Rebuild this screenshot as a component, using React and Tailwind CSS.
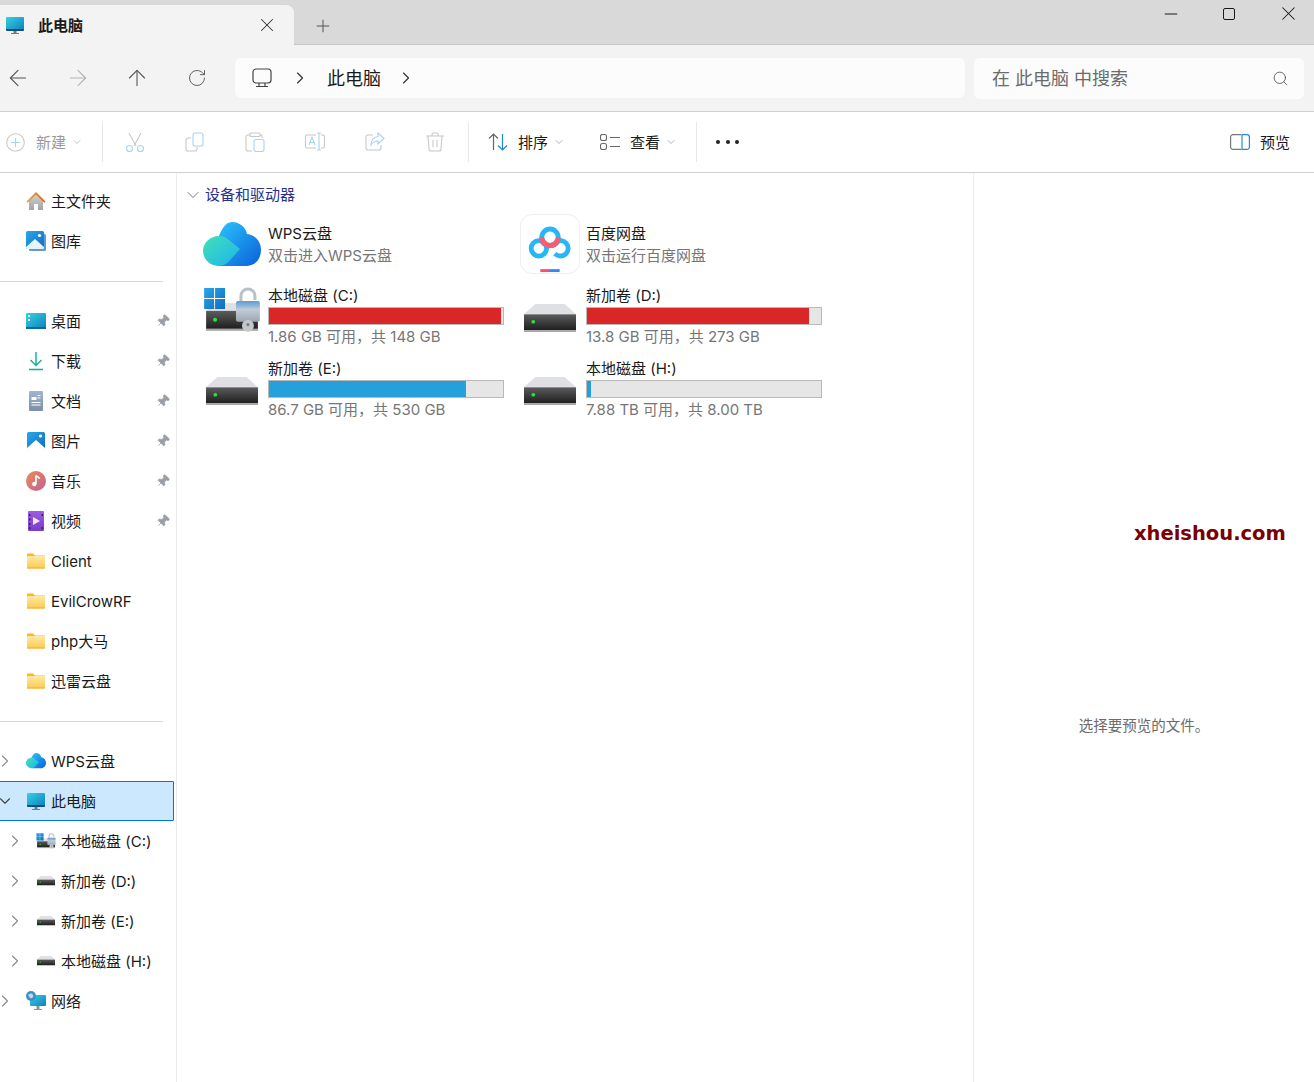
import { ArrowLeft, ArrowRight, ArrowUp, RotateCw, ChevronRight, ChevronDown, Search, X, Plus, Minus, Pin } from 'lucide-react'

const font = { fontFamily: 'Inter, "Noto Sans CJK SC", sans-serif' }

function Defs() {
  return (
    <svg width="0" height="0" className="absolute">
      <defs>
        <linearGradient id="driveFront" x1="0" y1="0" x2="0" y2="1">
          <stop offset="0" stopColor="#5c5c5c" />
          <stop offset="1" stopColor="#1f1f1f" />
        </linearGradient>
        <linearGradient id="pcScreen" x1="0" y1="0" x2="1" y2="1">
          <stop offset="0" stopColor="#36d2e0" />
          <stop offset="1" stopColor="#0f7fc0" />
        </linearGradient>
        <linearGradient id="cloudBack" x1="0" y1="0" x2="1" y2="1">
          <stop offset="0" stopColor="#2cc6ff" />
          <stop offset="1" stopColor="#0a5fd8" />
        </linearGradient>
        <linearGradient id="cloudFront" x1="0" y1="0" x2="1" y2="1">
          <stop offset="0" stopColor="#44e0b4" />
          <stop offset="1" stopColor="#1ab4f0" />
        </linearGradient>
        <linearGradient id="tileBlue" x1="0" y1="0" x2="1" y2="1">
          <stop offset="0" stopColor="#28a8ea" />
          <stop offset="1" stopColor="#0f6cbd" />
        </linearGradient>
        <linearGradient id="homeRoof" x1="0" y1="0" x2="1" y2="0">
          <stop offset="0" stopColor="#e8a33c" />
          <stop offset="1" stopColor="#d95f0e" />
        </linearGradient>
        <linearGradient id="homeWall" x1="0" y1="0" x2="0" y2="1">
          <stop offset="0" stopColor="#d2d2d2" />
          <stop offset="1" stopColor="#a2a2a2" />
        </linearGradient>
        <linearGradient id="docBody" x1="0" y1="0" x2="0" y2="1">
          <stop offset="0" stopColor="#a3b5cc" />
          <stop offset="1" stopColor="#7890ad" />
        </linearGradient>
        <linearGradient id="musicBody" x1="0" y1="0" x2="1" y2="1">
          <stop offset="0" stopColor="#ee8c4e" />
          <stop offset="1" stopColor="#c0609e" />
        </linearGradient>
        <linearGradient id="videoBody" x1="0" y1="0" x2="0" y2="1">
          <stop offset="0" stopColor="#a05ce0" />
          <stop offset="1" stopColor="#7a3cc8" />
        </linearGradient>
        <linearGradient id="folderBody" x1="0" y1="0" x2="0" y2="1">
          <stop offset="0" stopColor="#ffe9a6" />
          <stop offset="1" stopColor="#fcc94e" />
        </linearGradient>
        <linearGradient id="lockBody" x1="0" y1="0" x2="0" y2="1">
          <stop offset="0" stopColor="#5f9bd0" />
          <stop offset="0.25" stopColor="#8fb8dc" />
          <stop offset="0.4" stopColor="#c3ccd6" />
          <stop offset="1" stopColor="#9aa6b2" />
        </linearGradient>
      </defs>
    </svg>
  )
}

function PcIcon({ size = 20 }) {
  return (
    <svg width={size} height={size} viewBox="0 0 20 20">
      <rect x="1" y="2" width="18" height="13" rx="1" fill="url(#pcScreen)" />
      <path d="M1 14h18v1a1 1 0 0 1-1 1H2a1 1 0 0 1-1-1z" fill="#0b4f7a" />
      <rect x="8.5" y="16" width="3" height="2" fill="#5f7f95" />
      <rect x="6" y="18" width="8" height="1" fill="#5f7f95" />
    </svg>
  )
}

function HomeIcon() {
  return (
    <svg width="20" height="20" viewBox="0 0 20 20">
      <path d="M3 9.5 10 3l7 6.5V19H12v-6H8v6H3z" fill="url(#homeWall)" />
      <path d="M.5 10.5 10 1l9.5 9.5-1.2 1.2L10 3.6 1.7 11.7z" fill="url(#homeRoof)" />
    </svg>
  )
}

function GalleryIcon() {
  return (
    <svg width="20" height="20" viewBox="0 0 20 20">
      <rect x="3" y="3" width="17" height="17" rx="1.5" fill="#5c9bd6" />
      <rect x="0" y="0" width="18" height="18" rx="1.5" fill="url(#tileBlue)" />
      <path d="M0 16 9 8l9 8v1a1 1 0 0 1-1 1H1a1 1 0 0 1-1-1z" fill="#e8f3fb" />
      <circle cx="13.5" cy="4.5" r="1.6" fill="#fff" />
    </svg>
  )
}

function DesktopIcon() {
  return (
    <svg width="20" height="20" viewBox="0 0 20 20">
      <rect x="0" y="2" width="20" height="16" rx="1" fill="url(#pcScreen)" />
      <rect x="2" y="4" width="2" height="2" fill="#fff" />
      <rect x="2" y="8" width="2" height="2" fill="#e4f6fb" />
      <rect x="0" y="16" width="20" height="2" fill="#0b6a99" />
    </svg>
  )
}

function DownloadIcon() {
  return (
    <svg width="20" height="20" viewBox="0 0 20 20" fill="none" stroke="#1db39a" strokeWidth="1.5">
      <path d="M10 1v13M4.5 9 10 14.5 15.5 9" />
      <path d="M3 18.5h14" strokeWidth="1.6" />
    </svg>
  )
}

function DocIcon() {
  return (
    <svg width="20" height="20" viewBox="0 0 20 20">
      <rect x="3" y="0" width="14" height="20" rx="1" fill="url(#docBody)" />
      <path d="M5.5 6h5v3h-5zM11.5 4h3v1h-3zM5.5 11h9v1h-9zM5.5 13.5h9v1h-9zM11.5 6.5h3v1h-3z" fill="#fff" />
    </svg>
  )
}

function PictureIcon() {
  return (
    <svg width="20" height="20" viewBox="0 0 20 20">
      <rect x="1" y="1" width="18" height="18" rx="1.5" fill="url(#tileBlue)" />
      <path d="M1 17 10 9l9 8v1a1 1 0 0 1-1 1H2a1 1 0 0 1-1-1z" fill="#fff" />
      <circle cx="14.5" cy="5" r="1.6" fill="#fff" />
    </svg>
  )
}

function MusicIcon() {
  return (
    <svg width="20" height="20" viewBox="0 0 20 20">
      <circle cx="10" cy="10" r="10" fill="url(#musicBody)" />
      <path d="M10 4.5v8.2" stroke="#fff" strokeWidth="1.6" />
      <path d="M10 4.5c1 1.5 3 1.5 3.5 3.2" stroke="#fff" strokeWidth="1.6" fill="none" />
      <circle cx="8.3" cy="13" r="2.2" fill="#fff" />
    </svg>
  )
}

function VideoIcon() {
  return (
    <svg width="20" height="20" viewBox="0 0 20 20">
      <rect x="2" y="0" width="16" height="20" rx="1" fill="url(#videoBody)" />
      <path d="M3 3h1.5v2H3zM3 7.5h1.5v2H3zM3 12h1.5v2H3zM3 16h1.5v2H3zM15.5 3H17v2h-1.5zM15.5 16H17v2h-1.5z" fill="#3d1b78" />
      <path d="M7 6l7 4-7 4z" fill="#f0e6ff" />
    </svg>
  )
}

function FolderIcon() {
  return (
    <svg width="20" height="20" viewBox="0 0 20 20">
      <path d="M1 3.5A1 1 0 0 1 2 2.5h5l2 2h9a1 1 0 0 1 1 1V7H1z" fill="#fbb81e" />
      <rect x="1" y="5" width="18" height="12.5" rx="1" fill="url(#folderBody)" />
      <rect x="1" y="16.5" width="18" height="1" fill="#f4b02a" />
    </svg>
  )
}

function WpsCloud({ size = 58 }) {
  return (
    <svg width={size} height={size * 0.76} viewBox="0 0 58 44">
      <path d="M13 33C13 16 20 0 29 0c8 0 14 6 15 12 8 1 14 7 14 16 0 9-6 16-15 16H16z" fill="url(#cloudBack)" />
      <path d="M16 14c4 0 7 1.500 10 4l11 9-9 10c-3 4-7 7-12 7C7 44 0 37 0 29s7-15 16-15z" fill="url(#cloudFront)" />
    </svg>
  )
}

function BaiduIcon() {
  return (
    <div className="w-[60px] h-[60px] rounded-xl border border-[#eeeeee] bg-white flex items-center justify-center shrink-0">
      <svg width="60" height="60" viewBox="0 0 60 60" fill="none">
        <circle cx="18.500" cy="34.500" r="8" stroke="#27b7f5" strokeWidth="5" />
        <path d="M35 40a8 8 0 1 0 1-12" stroke="#27b7f5" strokeWidth="5" />
        <path d="M21.500 27c2 3 5 5 8.500 5s6.500-2 8.500-5" stroke="#27b7f5" strokeWidth="5" />
        <circle cx="30" cy="23" r="8.500" stroke="#27b7f5" strokeWidth="5" />
        <path d="M21.500 23a8.500 8.500 0 0 0 17 0" stroke="#ff5a6e" strokeWidth="5" />
        <rect x="20" y="56" width="10" height="3" fill="#ff4a78" />
        <rect x="30" y="56" width="10" height="3" fill="#2b8cff" />
      </svg>
    </div>
  )
}

function DriveIcon({ w = 52 }) {
  return (
    <svg width={w} height={w * 0.54} viewBox="0 0 56 30">
      <path d="M0 11 11 1a3 3 0 0 1 2-1h30a3 3 0 0 1 2 1l11 10z" fill="#dfe0e3" />
      <rect x="0" y="11" width="56" height="17" fill="url(#driveFront)" />
      <rect x="0" y="28" width="56" height="2" fill="#a5a5a5" />
      <circle cx="10" cy="19" r="2" fill="#27e63a" />
    </svg>
  )
}

function SystemDriveIcon({ w = 58 }) {
  return (
    <svg width={w} height={w * 0.79} viewBox="0 0 58 46">
      <path d="M3 24l9-8h34l9 8z" fill="#dfe0e3" />
      <rect x="3" y="24" width="52" height="18" fill="url(#driveFront)" />
      <rect x="3" y="42" width="52" height="2" fill="#a5a5a5" />
      <circle cx="12" cy="33" r="2" fill="#27e63a" />
      <path d="M1 1h10v10H1zM12 1h10v10H12zM1 12h10v10H1zM12 12h10v10H12z" fill="url(#tileBlue)" />
      <path d="M38 15V9a7 7 0 0 1 14 0v4" stroke="#b8c0c8" strokeWidth="3" fill="none" />
      <rect x="33" y="14" width="24" height="21" rx="2" fill="url(#lockBody)" />
      <circle cx="45" cy="39" r="6" fill="#c3c6ca" />
      <circle cx="45" cy="38" r="1.500" fill="#777" />
    </svg>
  )
}

function NetworkIcon() {
  return (
    <svg width="20" height="20" viewBox="0 0 20 20">
      <rect x="4" y="4" width="16" height="11" rx="1" fill="url(#pcScreen)" />
      <rect x="10.500" y="15" width="3" height="3" fill="#7f97a8" />
      <rect x="8" y="18" width="8" height="1" fill="#7f97a8" />
      <circle cx="5" cy="5" r="5" fill="#3e8fc8" />
      <path d="M2 4c2-2 4-2 5 0s-1 4-3 3z" fill="#bcd9ee" />
    </svg>
  )
}

// two-tone toolbar glyphs, all greyed out because nothing is selected
const Cut = () => (
  <svg width="20" height="20" viewBox="0 0 20 20" fill="none" strokeWidth="1.1">
    <path d="M4 1l7 13M16 1 9 14" stroke="#c8c8c8" />
    <circle cx="4.500" cy="16.500" r="3" stroke="#a9d3f5" />
    <circle cx="15.500" cy="16.500" r="3" stroke="#a9d3f5" />
  </svg>
)
const Copy = () => (
  <svg width="20" height="20" viewBox="0 0 20 20" fill="none" strokeWidth="1.1">
    <path d="M6 6H3a2 2 0 0 0-2 2v9a2 2 0 0 0 2 2h7a2 2 0 0 0 2-2v-2" stroke="#c8c8c8" />
    <rect x="8" y="1" width="10" height="13" rx="2" stroke="#a9d3f5" />
  </svg>
)
const Paste = () => (
  <svg width="20" height="20" viewBox="0 0 20 20" fill="none" strokeWidth="1.1">
    <path d="M5 3H3a2 2 0 0 0-2 2v12a2 2 0 0 0 2 2h4M15 3h2v3" stroke="#c8c8c8" />
    <rect x="5" y="1" width="10" height="3.500" rx="1" stroke="#c8c8c8" />
    <rect x="9" y="7.500" width="10" height="12" rx="2" stroke="#a9d3f5" />
  </svg>
)
const Rename = () => (
  <svg width="20" height="20" viewBox="0 0 20 20" fill="none" strokeWidth="1.1">
    <path d="M11 3H2a1.500 1.500 0 0 0-1.500 1.500v10A1.500 1.500 0 0 0 2 16h9M16 3h2a1.500 1.500 0 0 1 1.500 1.500v10A1.500 1.500 0 0 1 18 16h-2" stroke="#c8c8c8" />
    <path d="M12 1h2v17h-2M14 1h2M14 18h2" stroke="#a9d3f5" />
    <path d="M4 13l3-8 3 8M5 10.500h4" stroke="#a9d3f5" />
  </svg>
)
const Share = () => (
  <svg width="20" height="20" viewBox="0 0 20 20" fill="none" strokeWidth="1.1">
    <path d="M8 3H3a2 2 0 0 0-2 2v11a2 2 0 0 0 2 2h11a2 2 0 0 0 2-2v-3" stroke="#c8c8c8" />
    <path d="M13 1l6 5.500L13 12V9c-3 0-5 1-7 4 0-5 3-8 7-8.500z" stroke="#a9d3f5" />
  </svg>
)
const Trash = () => (
  <svg width="20" height="20" viewBox="0 0 20 20" fill="none" stroke="#c8c8c8" strokeWidth="1.1">
    <path d="M1 4h18M7 4V2.500A1.500 1.500 0 0 1 8.500 1h3A1.500 1.500 0 0 1 13 2.500V4M3 4l1 13a2 2 0 0 0 2 2h8a2 2 0 0 0 2-2l1-13M8 8v7M12 8v7" />
  </svg>
)

function ToolBtn({ children }) {
  return <div className="w-[60px] flex justify-center">{children}</div>
}

function Divider() {
  return <div className="w-px h-10 bg-[#e8e8e8]" />
}

function Caret({ color = 'text-[#8a8a8a]' }) {
  return (
    <div className="w-[10px] flex justify-center ml-[6px]">
      <ChevronDown size={12} strokeWidth={1.3} className={`shrink-0 ${color}`} />
    </div>
  )
}

function Row({ level = 0, arrow, icon, label, pinned, selected }) {
  return (
    <div className={`h-10 flex items-center ${level ? 'pl-[10px]' : ''} ${selected ? 'w-[175px] -ml-px bg-[#cce8ff] border border-[#0078d4] rounded-[1px]' : ''}`}>
      <div className="w-[10px] flex justify-center shrink-0">
        {arrow === 'right' && <ChevronRight size={20} strokeWidth={1.3} className="text-[#8a8a8a] shrink-0" />}
        {arrow === 'down' && <ChevronDown size={18} strokeWidth={1.5} className="text-[#444444] shrink-0" />}
      </div>
      <div className="ml-4 w-5 h-5 flex items-center justify-center shrink-0">{icon}</div>
      <span className="ml-[5px] mt-[2px] text-[15px] text-[#1a1a1a] whitespace-nowrap">{label}</span>
      {pinned && (
        <div className="ml-auto mr-[6px] flex">
          <Pin size={14} fill="#9aa0a6" strokeWidth={1.4} className="text-[#9aa0a6] rotate-45" />
        </div>
      )}
    </div>
  )
}

function SideDivider() {
  return (
    <div className="h-10 flex items-center">
      <div className="w-[163px] h-px bg-[#d6d6d6]" />
    </div>
  )
}

function AppTile({ icon, title, sub }) {
  return (
    <div className="flex items-center h-[66px] pb-1">
      <div className="w-[60px] flex justify-center shrink-0">{icon}</div>
      <div className="ml-[6px] mt-[2px] flex flex-col leading-[22px] text-[15px]">
        <span className="text-[#1a1a1a]">{title}</span>
        <span className="text-[#767676]">{sub}</span>
      </div>
    </div>
  )
}

function DriveTile({ icon, iconClass = 'mt-[6px]', name, pct, color, free }) {
  return (
    <div className="flex items-center h-[73px]">
      <div className={`w-[60px] flex justify-center shrink-0 ${iconClass}`}>{icon}</div>
      <div className="ml-[6px] mt-[2px] w-[236px] flex flex-col">
        <span className="text-[15px] leading-[22px] text-[#1a1a1a]">{name}</span>
        <div className="h-[18px] border border-[#b9b9b9] bg-[#e6e6e6]">
          <div className={`h-full ${color}`} style={{ width: `${pct}%` }} />
        </div>
        <span className="text-[15px] leading-[24px] text-[#767676]">{free}</span>
      </div>
    </div>
  )
}

export default function App() {
  return (
    <div className="relative w-[1314px] h-[1082px] overflow-hidden bg-white flex flex-col" style={font}>
      <Defs />

      {/* title bar */}
      <div className="h-[45px] shrink-0 bg-[#d9d9d9] border-b border-[#c6c6c6] flex items-start">
        <div className="w-[294px] h-[40px] mt-[5px] bg-[#f3f3f3] rounded-tr-lg flex items-center pl-[5px] relative z-10">
          <PcIcon size={20} />
          <span className="ml-[13px] mt-[2px] text-[15px] font-semibold text-[#1a1a1a]">此电脑</span>
          <X size={22} strokeWidth={1.1} className="ml-auto mr-[16px] text-[#333333]" />
        </div>
        <div className="ml-[19px] mt-[16px]">
          <Plus size={20} strokeWidth={1.2} className="text-[#555555]" />
        </div>
        <div className="ml-auto flex items-center text-[#1a1a1a] pt-[2px] pr-[14px] gap-[42px]">
          <Minus size={20} strokeWidth={1.2} />
          <div className="w-3 h-3 border-[1.5px] border-[#1a1a1a] rounded-[2px]" />
          <X size={23} strokeWidth={1.1} />
        </div>
      </div>

      {/* navigation bar */}
      <div className="h-[67px] shrink-0 bg-[#f3f3f3] border-b border-[#d0d0d0] flex items-center">
        <div className="w-[247px] flex items-center shrink-0 -ml-[12px]">
          <div className="w-[60px] flex justify-center"><ArrowLeft size={26} strokeWidth={1} className="text-[#555555]" /></div>
          <div className="w-[59px] flex justify-center"><ArrowRight size={26} strokeWidth={1} className="text-[#b4b4b4]" /></div>
          <div className="w-[60px] flex justify-center"><ArrowUp size={26} strokeWidth={1} className="text-[#555555]" /></div>
          <div className="w-[60px] flex justify-center"><RotateCw size={20} strokeWidth={1.1} className="text-[#555555]" /></div>
        </div>
        <div className="w-[730px] h-10 bg-[#fcfcfc] rounded-md flex items-center shrink-0 text-[18px] text-[#1a1a1a]">
          <svg width="20" height="20" viewBox="0 0 20 20" fill="none" stroke="#444444" strokeWidth="1.2" className="ml-[17px]">
            <rect x="1" y="1" width="18" height="14" rx="3" />
            <path d="M7 15v3M13 15v3M4 18.500h12" />
          </svg>
          <ChevronRight size={20} strokeWidth={1.4} className="ml-[18px] text-[#333333]" />
          <span className="ml-[17px]">此电脑</span>
          <ChevronRight size={20} strokeWidth={1.4} className="ml-[15px] text-[#333333]" />
        </div>
        <div className="ml-[9px] w-[330px] h-[41px] bg-[#fcfcfc] rounded-md flex items-center pl-[18px] pr-[15px] shrink-0">
          <span className="text-[18px] text-[#6b6b6b]">在 此电脑 中搜索</span>
          <Search size={17} strokeWidth={1.1} className="ml-auto text-[#444444]" />
        </div>
      </div>

      {/* command bar */}
      <div className="h-[61px] shrink-0 bg-white border-b border-[#d0d0d0] flex items-center text-[15px] text-[#1a1a1a]">
        <svg width="19" height="19" viewBox="0 0 19 19" fill="none" strokeWidth="1.1" className="ml-[6px]">
          <circle cx="9.500" cy="9.500" r="8.800" stroke="#c8c8c8" />
          <path d="M9.500 5v9M5 9.500h9" stroke="#a9d3f5" />
        </svg>
        <span className="ml-[11px] mt-[2px] text-[#9a9a9a]">新建</span>
        <Caret color="text-[#a8a8a8]" />
        <div className="ml-[20px]"><Divider /></div>
        <div className="flex items-center ml-[2px]">
          <ToolBtn><Cut /></ToolBtn>
          <ToolBtn><Copy /></ToolBtn>
          <ToolBtn><Paste /></ToolBtn>
          <ToolBtn><Rename /></ToolBtn>
          <ToolBtn><Share /></ToolBtn>
          <ToolBtn><Trash /></ToolBtn>
        </div>
        <div className="ml-[3px]"><Divider /></div>
        <svg width="20" height="18" viewBox="0 0 20 18" fill="none" strokeWidth="1.2" className="ml-[19px]">
          <path d="M5.500 17V1M1 5.500 5.500 1 10 5.500" stroke="#666666" />
          <path d="M14.500 1v16M10 12.500l4.500 4.500 4.500-4.500" stroke="#1a86e0" />
        </svg>
        <span className="ml-[10px] mt-[2px]">排序</span>
        <Caret />
        <svg width="20" height="16" viewBox="0 0 20 16" fill="none" stroke="#666666" strokeWidth="1.1" className="ml-[36px]">
          <rect x="0.500" y="0.500" width="6" height="6" rx="2" />
          <rect x="0.500" y="9.500" width="6" height="6" rx="2" />
          <path d="M10 3.500h10M10 12.500h10" />
        </svg>
        <span className="ml-[10px] mt-[2px]">查看</span>
        <Caret />
        <div className="ml-[20px]"><Divider /></div>
        <div className="ml-[19px] flex gap-[5.500px]">
          <div className="w-[4px] h-[4px] rounded-full bg-[#222222]" />
          <div className="w-[4px] h-[4px] rounded-full bg-[#222222]" />
          <div className="w-[4px] h-[4px] rounded-full bg-[#222222]" />
        </div>
        <svg width="20" height="16" viewBox="0 0 20 16" fill="none" strokeWidth="1.2" className="ml-auto">
          <path d="M11 .6H3A2.400 2.400 0 0 0 .6 3v10A2.400 2.400 0 0 0 3 15.400h8" stroke="#777777" />
          <path d="M12 .6h5A2.400 2.400 0 0 1 19.400 3v10a2.400 2.400 0 0 1-2.400 2.400h-5z" stroke="#2b88d8" />
        </svg>
        <span className="ml-[10px] mt-[2px] mr-[24px]">预览</span>
      </div>

      {/* body */}
      <div className="flex-1 flex min-h-0">
        <aside className="w-[177px] shrink-0 border-r border-[#ededed] pt-2">
          <Row icon={<HomeIcon />} label="主文件夹" />
          <Row icon={<GalleryIcon />} label="图库" />
          <SideDivider />
          <Row icon={<DesktopIcon />} label="桌面" pinned />
          <Row icon={<DownloadIcon />} label="下载" pinned />
          <Row icon={<DocIcon />} label="文档" pinned />
          <Row icon={<PictureIcon />} label="图片" pinned />
          <Row icon={<MusicIcon />} label="音乐" pinned />
          <Row icon={<VideoIcon />} label="视频" pinned />
          <Row icon={<FolderIcon />} label="Client" />
          <Row icon={<FolderIcon />} label="EvilCrowRF" />
          <Row icon={<FolderIcon />} label="php大马" />
          <Row icon={<FolderIcon />} label="迅雷云盘" />
          <SideDivider />
          <Row arrow="right" icon={<WpsCloud size={20} />} label="WPS云盘" />
          <Row arrow="down" icon={<PcIcon />} label="此电脑" selected />
          <Row level={1} arrow="right" icon={<SystemDriveIcon w={20} />} label="本地磁盘 (C:)" />
          <Row level={1} arrow="right" icon={<DriveIcon w={18} />} label="新加卷 (D:)" />
          <Row level={1} arrow="right" icon={<DriveIcon w={18} />} label="新加卷 (E:)" />
          <Row level={1} arrow="right" icon={<DriveIcon w={18} />} label="本地磁盘 (H:)" />
          <Row arrow="right" icon={<NetworkIcon />} label="网络" />
        </aside>

        <main className="flex-1 pl-[11px] pt-[10px] min-w-0">
          <div className="flex items-center h-6 text-[15px] text-[#27318b]">
            <ChevronDown size={20} strokeWidth={1.1} className="-ml-[5px] text-[#6b6b6b]" />
            <span className="ml-[2px]">设备和驱动器</span>
          </div>
          <div className="grid grid-cols-[318px_318px] pl-[15px] mt-[6px] -ml-px">
            <AppTile icon={<WpsCloud />} title="WPS云盘" sub="双击进入WPS云盘" />
            <AppTile icon={<BaiduIcon />} title="百度网盘" sub="双击运行百度网盘" />
            <DriveTile icon={<SystemDriveIcon />} iconClass="mb-[12px]" name="本地磁盘 (C:)" pct={99} color="bg-[#da2626]" free="1.86 GB 可用，共 148 GB" />
            <DriveTile icon={<DriveIcon />} name="新加卷 (D:)" pct={95} color="bg-[#da2626]" free="13.8 GB 可用，共 273 GB" />
            <DriveTile icon={<DriveIcon />} name="新加卷 (E:)" pct={84} color="bg-[#26a0da]" free="86.7 GB 可用，共 530 GB" />
            <DriveTile icon={<DriveIcon />} name="本地磁盘 (H:)" pct={1.500} color="bg-[#26a0da]" free="7.88 TB 可用，共 8.00 TB" />
          </div>
        </main>

        <aside className="w-[341px] shrink-0 border-l border-[#ededed] flex justify-center pt-[542px]">
          <span className="text-[14.5px] leading-[22px] text-[#6b6b6b]">选择要预览的文件。</span>
        </aside>
      </div>

      {/* watermark sits on top of the preview pane */}
      <div className="absolute left-[1134px] top-[520px] text-[19.500px] leading-[28px] font-bold text-[#7a0000] whitespace-nowrap" style={{ fontFamily: '"DejaVu Sans", sans-serif' }}>
        xheishou.com
      </div>
    </div>
  )
}
